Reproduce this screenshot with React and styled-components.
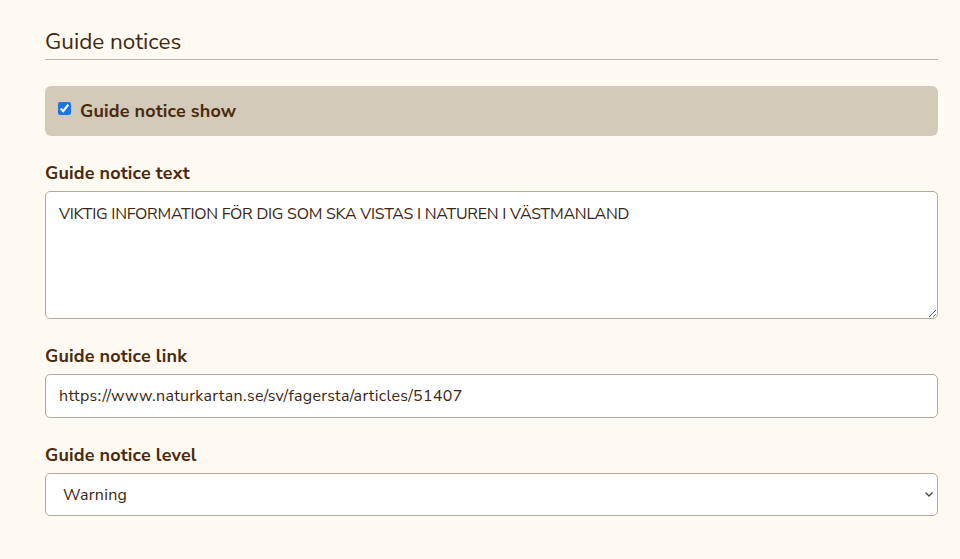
import React, { useState } from "react"
import styled, { createGlobalStyle } from "styled-components"

const GlobalStyle = createGlobalStyle`
    html, body {
        margin: 0;
        background: #fffbf2;
    }
    body {
        font-family: "Nunito Sans", Lato, "Noto Sans", sans-serif;
        color: #4a2a0e;
    }
`

const App = () => {
    const [show, setShow] = useState(true)
    const [text, setText] = useState("VIKTIG INFORMATION FÖR DIG SOM SKA VISTAS I NATUREN I VÄSTMANLAND")
    const [link, setLink] = useState("https://www.naturkartan.se/sv/fagersta/articles/51407")
    const [level, setLevel] = useState("warning")

    return (
        <>
            <GlobalStyle />
            <Page>
                <Heading>Guide notices</Heading>
                <CheckPanel>
                    <Check
                        type="checkbox"
                        checked={show}
                        onChange={e => setShow(e.target.checked)}
                    />
                    <CheckLabel>Guide notice show</CheckLabel>
                </CheckPanel>

                <Field>
                    <Label>Guide notice text</Label>
                    <TextArea value={text} onChange={e => setText(e.target.value)} />
                </Field>

                <Field>
                    <Label>Guide notice link</Label>
                    <Input type="text" value={link} onChange={e => setLink(e.target.value)} />
                </Field>

                <Field>
                    <Label>Guide notice level</Label>
                    <SelectWrap>
                        <Select value={level} onChange={e => setLevel(e.target.value)}>
                            <option value="info">Info</option>
                            <option value="warning">Warning</option>
                            <option value="danger">Danger</option>
                        </Select>
                        <Chevron viewBox="0 0 12 12">
                            <path d="M2.5 4.5 L6 8 L9.5 4.5" fill="none" stroke="#444" strokeWidth="1.3" />
                        </Chevron>
                    </SelectWrap>
                </Field>
            </Page>
        </>
    )
}

const Page = styled.div`
    padding: 27px 22px 0 45px;
    display: flex;
    flex-direction: column;
`

const Heading = styled.h2`
    margin: 0;
    font-size: 22.5px;
    font-weight: 400;
    line-height: 30px;
    color: #3f2a14;
    padding-bottom: 2px;
    border-bottom: 1px solid #bfb7a8;
`

const CheckPanel = styled.label`
    margin-top: 26px;
    height: 50px;
    background: #d4cab9;
    border-radius: 6px;
    display: flex;
    align-items: center;
    padding: 0 13px;
    box-sizing: border-box;
`

const Check = styled.input`
    width: 13px;
    height: 13px;
    margin: 0 9px 5px 0;
    accent-color: #1a73e8;
`

const CheckLabel = styled.span`
    font-size: 18px;
    font-weight: 700;
    letter-spacing: 0.15px;
    color: #4a2a0e;
`

const Field = styled.div`
    margin-top: 26px;
    display: flex;
    flex-direction: column;
`

const Label = styled.label`
    font-size: 18px;
    font-weight: 700;
    letter-spacing: 0.15px;
    line-height: 22px;
    margin-bottom: 7px;
    color: #4a2a0e;
`

const controlBase = `
    box-sizing: border-box;
    width: 100%;
    background: #fff;
    border: 1px solid #b5ab9b;
    border-radius: 5px;
    font-family: "Nunito Sans", Lato, "Noto Sans", sans-serif;
    font-size: 16px;
    color: #3a2612;
    outline: none;
`

const TextArea = styled.textarea`
    ${controlBase}
    height: 128px;
    padding: 11px 13px;
    line-height: 22px;
    letter-spacing: -0.25px;
    resize: vertical;
    display: block;
`

const Input = styled.input`
    ${controlBase}
    height: 44px;
    padding: 0 13px;
    letter-spacing: 0.3px;
`

const SelectWrap = styled.div`
    position: relative;
`

const Select = styled.select`
    ${controlBase}
    height: 43px;
    padding: 0 17px;
    letter-spacing: 0.3px;
    appearance: none;
`

const Chevron = styled.svg`
    position: absolute;
    right: 3px;
    top: 15px;
    width: 12px;
    height: 12px;
    pointer-events: none;
`

export default App
